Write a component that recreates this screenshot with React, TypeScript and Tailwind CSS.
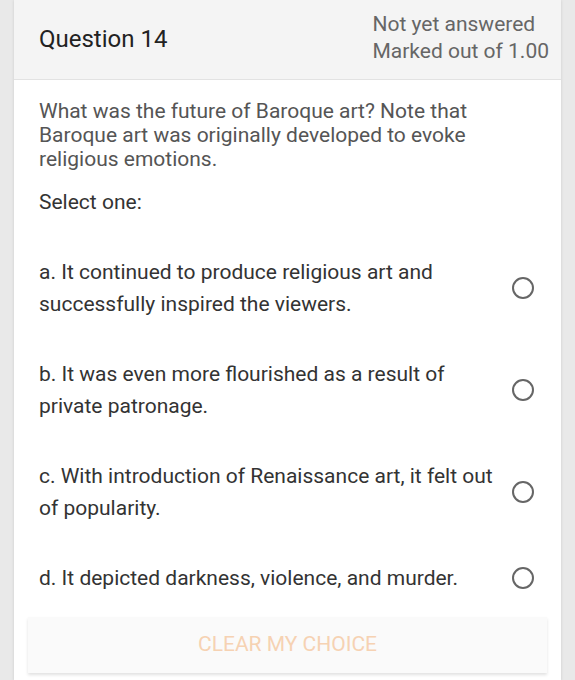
import React from "react";

export default function App() {
  const options = [
    "a. It continued to produce religious art and successfully inspired the viewers.",
    "b. It was even more flourished as a result of private patronage.",
    "c. With introduction of Renaissance art, it felt out of popularity.",
    "d. It depicted darkness, violence, and murder.",
  ];

  return (
    <div className="min-h-[680px] bg-[#e9e9e9] px-[14px] font-['Roboto',sans-serif]">
      <div className="bg-white shadow-[0_0_3px_rgba(0,0,0,0.12)] min-h-[680px]">
        <div className="h-[80px] bg-[#f4f4f4] border-b border-[#e2e2e2] flex items-center justify-between pl-[25px] pr-[12px]">
          <div className="text-[24px] text-[#222] -mt-[2px]">Question 14</div>
          <div className="text-[21px] leading-[27px] text-[#666] -mt-[3px]">
            <div>Not yet answered</div>
            <div>Marked out of 1.00</div>
          </div>
        </div>

        <div className="pl-[25px] pr-[14px] pt-[19px]">
          <p className="text-[21px] leading-[24px] text-[#555] pr-[60px]">
            What was the future of Baroque art? Note that Baroque art was originally developed to evoke religious emotions.
          </p>
          <p className="mt-[19px] text-[21px] leading-[24px] text-[#333]">Select one:</p>

          <div className="mt-[23px]">
            {options.map((opt, i) => (
              <div key={i} className="flex items-center py-[19px]">
                <div className="flex-1 text-[21px] leading-[32px] text-[#333]">{opt}</div>
                <div className="ml-[15px] mr-[13px] w-[22px] h-[22px] rounded-full border-2 border-[#666] shrink-0" />
              </div>
            ))}
          </div>
        </div>

        <div className="px-[14px] pt-[4px] pb-[8px]">
          <button className="w-full h-[56px] bg-[#fafafa] shadow-[0_2px_3px_rgba(0,0,0,0.12)] text-[21px] text-[#f6d2b3] uppercase">
            Clear my choice
          </button>
        </div>
      </div>
    </div>
  );
}
